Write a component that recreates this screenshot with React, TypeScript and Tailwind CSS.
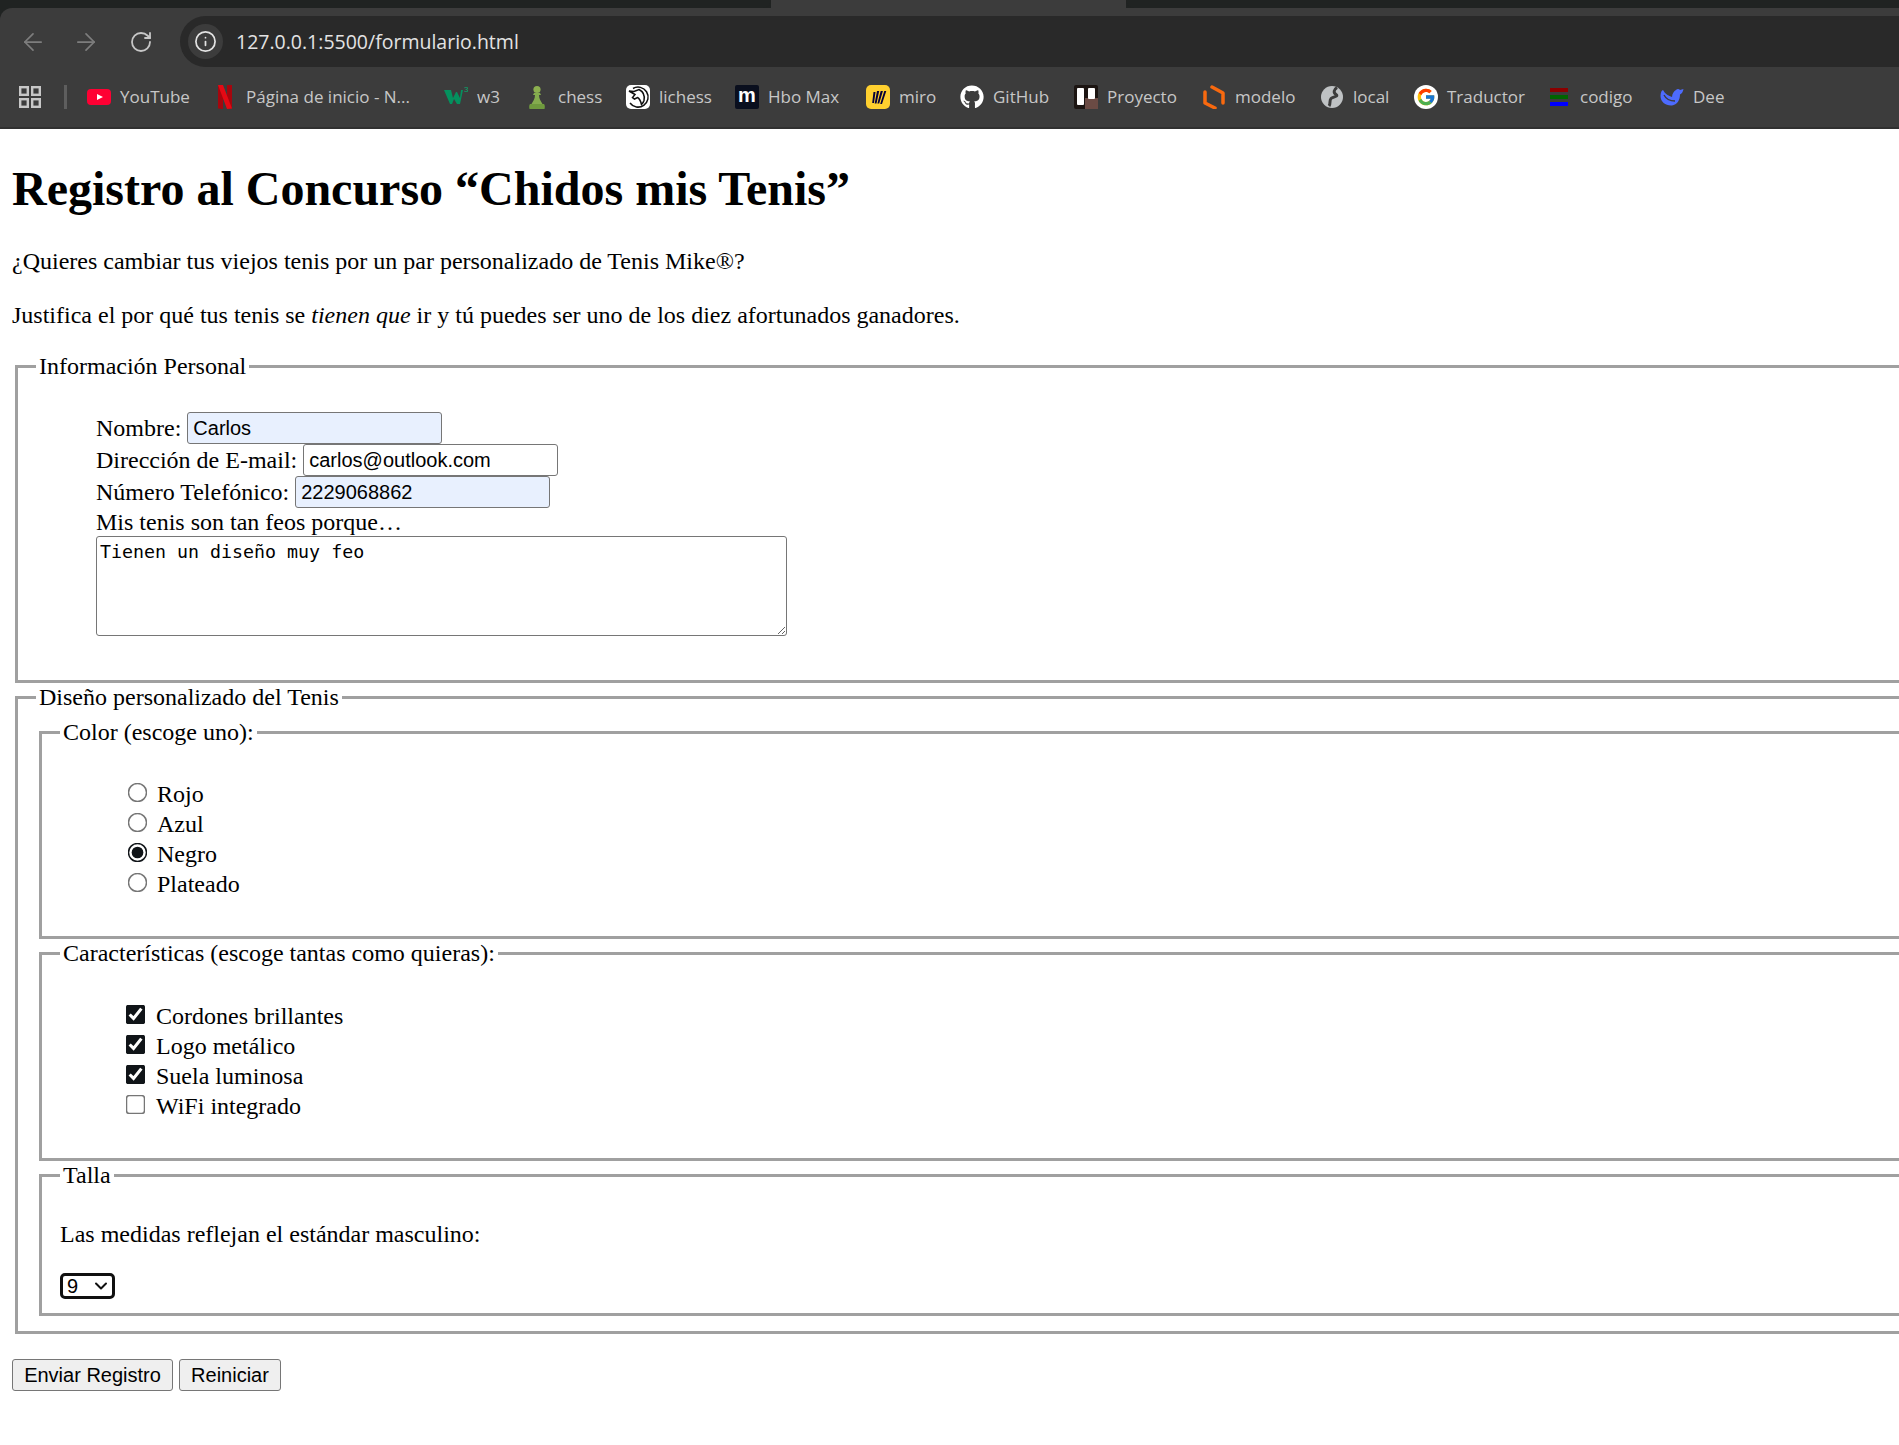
import { ArrowLeft, ArrowRight, RotateCw, Info, ChevronDown } from 'lucide-react';
import { FaGithub } from 'react-icons/fa';
import { FcGoogle } from 'react-icons/fc';

const serif = "font-['Liberation_Serif','Times_New_Roman',serif]";

const Bookmark = ({ icon, label, width }: { icon: React.ReactNode; label: string; width: string }) => (
  <div className={`flex items-center gap-[9px] ${width}`}>
    <div className="flex w-6 h-6 items-center justify-center shrink-0">{icon}</div>
    <span className="whitespace-nowrap">{label}</span>
  </div>
);

const bookmarks = [
  {
    label: 'YouTube',
    width: 'w-[126px]',
    icon: (
      <svg viewBox="0 0 24 24" className="w-6 h-6">
        <rect x="0" y="4" width="24" height="16" rx="4" fill="#ff0033" />
        <path d="M10 9l6 3-6 3z" fill="#fff" />
      </svg>
    ),
  },
  {
    label: 'Página de inicio - N...',
    width: 'w-[231px]',
    icon: (
      <svg viewBox="0 0 24 24" className="w-6 h-6">
        <path d="M5 0h5v24l-5-.5z" fill="#a5060e" />
        <path d="M14 0h5v23.5l-5 .5z" fill="#a5060e" />
        <path d="M5 0h5l9 23.5-5 .5z" fill="#e50914" />
      </svg>
    ),
  },
  {
    label: 'w3',
    width: 'w-[81px]',
    icon: (
      <svg viewBox="0 0 24 24" className="w-6 h-6">
        <path d="M0 5h7l2 8 3-6h1l3 6 1-8h2l-3 14h-3l-3-5-2 5H6z" fill="#04915e" />
        <text x="20" y="7" fontSize="8" fill="#04aa6d" fontFamily="Liberation Sans, sans-serif">3</text>
      </svg>
    ),
  },
  {
    label: 'chess',
    width: 'w-[101px]',
    icon: (
      <svg viewBox="0 0 24 24" className="w-6 h-6">
        <circle cx="12" cy="4.5" r="3.6" fill="#8cb04f" />
        <path d="M9 8h6l1 2h-2c0 4 2 6 3.500 9h-11c1.500-3 3.500-5 3.500-9H8z" fill="#84ac4e" />
        <path d="M5 19h14c1 1 1 3 .5 5h-15c-.5-2-.5-4 .5-5z" fill="#6f9a3e" />
      </svg>
    ),
  },
  {
    label: 'lichess',
    width: 'w-[109px]',
    icon: (
      <svg viewBox="0 0 24 24" className="w-6 h-6" fill="none" stroke="#111" strokeWidth="1.500">
        <rect width="24" height="24" rx="5" fill="#fff" stroke="none" />
        <path d="M7 3.500a10 10 0 1 1-3 14.500" />
        <path d="M3 6l5 .5 5-2c4 2 6 6 5 11-.5 2-1.500 3-2.500 4-1-4-2-6-4-7l-3 1.500-2-1.500 2.500-3z" />
      </svg>
    ),
  },
  {
    label: 'Hbo Max',
    width: 'w-[131px]',
    icon: (
      <div className="flex w-6 h-6 rounded-[2px] bg-[#0a0f1e] items-center justify-center text-white font-bold text-[20px] leading-none font-['Liberation_Sans',sans-serif] pb-[4px]">
        m
      </div>
    ),
  },
  {
    label: 'miro',
    width: 'w-[94px]',
    icon: (
      <svg viewBox="0 0 24 24" className="w-6 h-6">
        <rect width="24" height="24" rx="5" fill="#ffd02f" />
        <path d="M7.500 7h2L8 18H6.200zM11 6h2.200L10.500 18.500H8.700zM14.700 6h2.200L13.200 18.500h-1.800zM18.300 6h2L16 19h-1.800z" fill="#050038" />
      </svg>
    ),
  },
  {
    label: 'GitHub',
    width: 'w-[114px]',
    icon: <FaGithub className="w-6 h-6 text-white" />,
  },
  {
    label: 'Proyecto',
    width: 'w-[128px]',
    icon: (
      <svg viewBox="0 0 24 24" className="w-6 h-6">
        <rect width="24" height="24" rx="2" fill="#1c1512" />
        <rect x="11" y="13" width="13" height="11" fill="#6b4b44" />
        <rect x="3" y="3" width="7" height="17" rx="1" fill="#fff" />
        <rect x="14" y="3" width="7" height="11" rx="1" fill="#fff" />
      </svg>
    ),
  },
  {
    label: 'modelo',
    width: 'w-[118px]',
    icon: (
      <svg viewBox="0 0 24 24" className="w-6 h-6" fill="none" stroke="#f8690f" strokeWidth="3.500" strokeLinecap="round" strokeLinejoin="round">
        <path d="M10 2l11 6v10" />
        <path d="M3 7v11l10 5" />
      </svg>
    ),
  },
  {
    label: 'local',
    width: 'w-[94px]',
    icon: (
      <svg viewBox="0 0 24 24" className="w-6 h-6">
        <circle cx="12" cy="12" r="11" fill="#bfc2c4" />
        <path d="M17 2.500c-3 2-4 5-1 7s-3 2-5 4 0 5-2 7.500" fill="none" stroke="#3c3c3c" strokeWidth="3" />
      </svg>
    ),
  },
  {
    label: 'Traductor',
    width: 'w-[133px]',
    icon: (
      <div className="flex w-6 h-6 rounded-full bg-white items-center justify-center">
        <FcGoogle className="w-5 h-5" />
      </div>
    ),
  },
  {
    label: 'codigo',
    width: 'w-[113px]',
    icon: (
      <div className="flex w-[18px] flex-col gap-[3px]">
        <div className="h-[4px] bg-[#8b0000]" />
        <div className="h-[4px] bg-[#006400]" />
        <div className="h-[4px] bg-[#0000ff]" />
      </div>
    ),
  },
  {
    label: 'Dee',
    width: 'w-[80px]',
    icon: (
      <svg viewBox="0 0 24 24" className="w-6 h-6">
        <path d="M.5 11C.5 7 2 5 3 5c2 4 6 6 9 7 0-3 2-6 4-7 1-1.500 3-1.500 4 0l3.500-1c-.5 3-2 5-3.500 5.500 0 5.500-3 10.500-8 11C6 21 .5 17 .5 11z" fill="#4d6bfe" />
        <path d="M4 10c2 4 6 6 11 6" fill="none" stroke="#3c3c3c" strokeWidth="1.300" />
      </svg>
    ),
  },
];

const Legend = ({ children }: { children: React.ReactNode }) => (
  <legend className="px-[3px] leading-[28px]">{children}</legend>
);

const inputClass =
  "w-[255px] h-[32px] border border-[#767676] rounded-[3px] px-[5px] text-[20px] font-['Liberation_Sans',Arial,sans-serif] text-black";

const radios = ['Rojo', 'Azul', 'Negro', 'Plateado'];
const checks = ['Cordones brillantes', 'Logo metálico', 'Suela luminosa', 'WiFi integrado'];

const App = () => {
  return (
    <div className="w-[1899px] h-[1445px] overflow-hidden bg-white">
      {/* barra del navegador */}
      <div className="h-[129px] bg-[#202322] font-['Open_Sans',sans-serif]">
        <div className="flex h-[8px]">
          <div className="w-[771px] rounded-br-[10px] bg-[#202322]" />
          <div className="w-[355px] bg-[#3c3c3c]" />
          <div className="flex-1 rounded-bl-[10px] bg-[#202322]" />
        </div>
        <div className="h-[121px] bg-[#3c3c3c] rounded-tl-[12px] border-b-2 border-[#303030]">
          <div className="flex items-center h-[59px] pl-[19px] pt-[8px]">
            <ArrowLeft className="w-[28px] h-[28px] text-[#7d7d7d]" strokeWidth={1.5} />
            <ArrowRight className="w-[28px] h-[28px] ml-[25px] text-[#7d7d7d]" strokeWidth={1.5} />
            <RotateCw className="w-[24px] h-[24px] ml-[29px] text-[#c7c7c7]" strokeWidth={1.8} />
            <div className="ml-[27px] flex-1 flex items-center h-[51px] rounded-l-full bg-[#292929] pl-[8px]">
              <div className="flex w-[35px] h-[35px] rounded-full bg-[#3c3c3c] items-center justify-center">
                <Info className="w-[23px] h-[23px] text-[#e3e3e3]" strokeWidth={1.8} />
              </div>
              <span className="ml-[13px] text-[19.500px] text-[#e3e3e3] leading-none">127.0.0.1:5500/formulario.html</span>
            </div>
          </div>
          <div className="flex items-center h-[59px] pl-[19px] text-[17px] text-[#c7c7c7]">
            <svg viewBox="0 0 22 22" className="w-[22px] h-[22px]" fill="none" stroke="#c7c7c7" strokeWidth="2.400">
              <rect x="1.200" y="1.200" width="7.600" height="7.600" />
              <rect x="13.200" y="1.200" width="7.600" height="7.600" />
              <rect x="1.200" y="13.200" width="7.600" height="7.600" />
              <rect x="13.200" y="13.200" width="7.600" height="7.600" />
            </svg>
            <div className="ml-[23px] mr-[20px] w-[3px] h-[24px] bg-[#5e5e5e]" />
            <div className="flex items-center">
              {bookmarks.map((b) => (
                <Bookmark key={b.label} icon={b.icon} label={b.label} width={b.width} />
              ))}
            </div>
          </div>
        </div>
      </div>

      {/* formulario */}
      <div className={`${serif} text-[24px] text-black px-[12px] leading-[28px]`}>
        <h1 className="text-[48px] font-bold leading-[55px] pt-[32px] pb-[31px]">Registro al Concurso “Chidos mis Tenis”</h1>
        <p>¿Quieres cambiar tus viejos tenis por un par personalizado de Tenis Mike®?</p>
        <p className="mt-[26px] mb-[23px]">
          Justifica el por qué tus tenis se <em>tienen que</em> ir y tú puedes ser uno de los diez afortunados ganadores.
        </p>

        <fieldset className="w-[2000px] ml-[3px] border-[3px] border-[#a0a0a0] px-[18px] pb-[44px]">
          <Legend>Información Personal</Legend>
          <div className="pl-[60px] pt-[32px]">
            <div className="flex items-center gap-[6px] h-[32px]">
              <label>Nombre:</label>
              <input className={`${inputClass} bg-[#e8f0fe]`} defaultValue="Carlos" />
            </div>
            <div className="flex items-center gap-[6px] h-[32px]">
              <label>Dirección de E-mail:</label>
              <input className={`${inputClass} bg-white`} defaultValue="carlos@outlook.com" />
            </div>
            <div className="flex items-center gap-[6px] h-[32px]">
              <label>Número Telefónico:</label>
              <input className={`${inputClass} bg-[#e8f0fe]`} defaultValue="2229068862" />
            </div>
            <div>Mis tenis son tan feos porque…</div>
            <textarea
              className="block w-[691px] h-[100px] border border-[#767676] rounded-[3px] px-[3px] py-[3px] text-[18.300px] leading-[24px] font-['DejaVu_Sans_Mono','Liberation_Mono',monospace]"
              defaultValue="Tienen un diseño muy feo"
            />
          </div>
        </fieldset>

        <fieldset className="w-[2000px] ml-[3px] border-[3px] border-[#a0a0a0] px-[18px] pt-[7px] pb-[15px]">
          <Legend>Diseño personalizado del Tenis</Legend>

          <fieldset className="ml-[3px] mr-[3px] border-[3px] border-[#a0a0a0] px-[18px] pb-[37px]">
            <Legend>Color (escoge uno):</Legend>
            <div className="pl-[60px] pt-[33px]">
              {radios.map((r) => (
                <label key={r} className="flex items-center h-[30px]">
                  <input type="radio" name="color" defaultChecked={r === 'Negro'} className="w-[13px] h-[13px] scale-150 ml-[11px] mr-[13px] -mt-[3px] accent-[#101418]" />
                  {r}
                </label>
              ))}
            </div>
          </fieldset>

          <fieldset className="ml-[3px] mr-[3px] border-[3px] border-[#a0a0a0] px-[18px] pb-[37px]">
            <Legend>Características (escoge tantas como quieras):</Legend>
            <div className="pl-[60px] pt-[34px]">
              {checks.map((c) => (
                <label key={c} className="flex items-center h-[30px]">
                  <input type="checkbox" defaultChecked={c !== 'WiFi integrado'} className="w-[13px] h-[13px] scale-150 ml-[9px] mr-[14px] -mt-[4px] accent-[#101418]" />
                  {c}
                </label>
              ))}
            </div>
          </fieldset>

          <fieldset className="ml-[3px] mr-[3px] border-[3px] border-[#a0a0a0] px-[18px] pb-[14px]">
            <Legend>Talla</Legend>
            <p className="pt-[31px]">Las medidas reflejan el estándar masculino:</p>
            <div className="relative mt-[25px] w-[55px] h-[26px]">
              <select className="block w-full h-full appearance-none border-[3px] border-[#101010] rounded-[5px] pl-[4px] text-[20px] leading-none font-['Liberation_Sans',Arial,sans-serif]" defaultValue="9">
                <option>9</option>
              </select>
              <ChevronDown className="absolute right-[4px] top-[3px] w-[20px] h-[20px] pointer-events-none text-[#101010]" strokeWidth={2.400} />
            </div>
          </fieldset>
        </fieldset>

        <div className="flex gap-[6px] mt-[25px]">
          <button className="h-[32px] w-[161px] border border-[#767676] rounded-[3px] bg-[#efefef] text-[20px] font-['Liberation_Sans',Arial,sans-serif]">Enviar Registro</button>
          <button className="h-[32px] w-[102px] border border-[#767676] rounded-[3px] bg-[#efefef] text-[20px] font-['Liberation_Sans',Arial,sans-serif]">Reiniciar</button>
        </div>
      </div>
    </div>
  );
};

export default App;
